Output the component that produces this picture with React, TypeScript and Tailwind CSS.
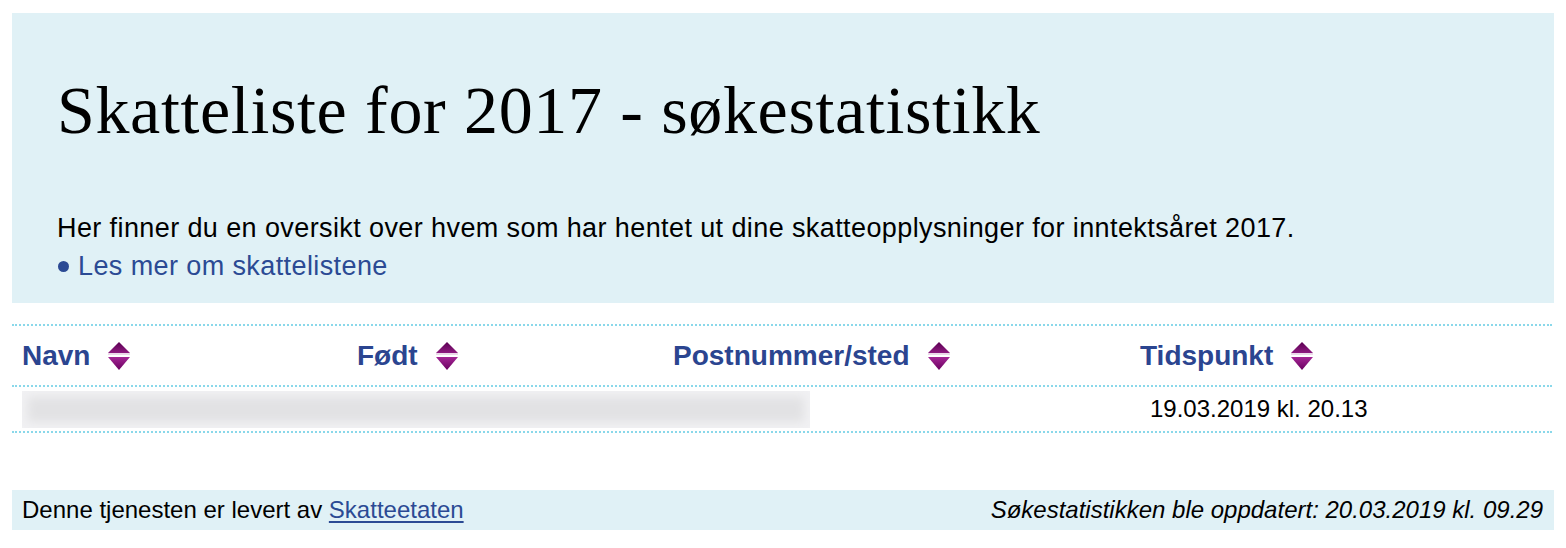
import type { ReactNode } from 'react';

function SortIcon() {
  return (
    <svg width="24" height="30" viewBox="0 0 24 30" className="ml-[17px] shrink-0">
      <defs>
        <linearGradient id="sortUp" x1="0" y1="0" x2="0" y2="1">
          <stop offset="0" stopColor="#5b0052" />
          <stop offset="1" stopColor="#8e1a80" />
        </linearGradient>
        <linearGradient id="sortDown" x1="0" y1="0" x2="0" y2="1">
          <stop offset="0" stopColor="#a42695" />
          <stop offset="1" stopColor="#6a0060" />
        </linearGradient>
      </defs>
      <polygon points="12,1 23,12 1,12" fill="url(#sortUp)" />
      <rect x="1" y="12.5" width="22" height="1" fill="#b06aa8" opacity="0.5" />
      <polygon points="1,16 23,16 12,29" fill="url(#sortDown)" />
    </svg>
  );
}

function HeaderCell({ children, className }: { children: ReactNode; className: string }) {
  return (
    <div className={`flex items-center ${className}`}>
      <span>{children}</span>
      <SortIcon />
    </div>
  );
}

export default function App() {
  return (
    <div className="min-h-[548px] bg-white px-3 pt-[13px] font-['Liberation_Sans',Arial,sans-serif] text-black">
      <section className="h-[290px] bg-[#e0f1f6] px-[45px] pt-[57px]">
        <h1 className="font-['Liberation_Serif',Georgia,serif] text-[68px] leading-[80px] tracking-[0.65px]">
          Skatteliste for 2017 - søkestatistikk
        </h1>
        <p className="mt-[62px] text-[27px] leading-[32px] tracking-[0.4px]">
          Her finner du en oversikt over hvem som har hentet ut dine skatteopplysninger for inntektsåret 2017.
        </p>
        <a
          href="#"
          className="mt-[6px] flex items-center text-[27px] leading-[32px] tracking-[0.4px] text-[#2b4a94]"
        >
          <span className="ml-px mr-[9px] inline-block h-[11px] w-[11px] rounded-full bg-[#2b4a94]" />
          Les mer om skattelistene
        </a>
      </section>

      <div className="mr-[2px] mt-[21px] border-t-2 border-dotted border-[#8ad8ea]">
        <div className="flex h-[59px] items-center pl-[10px] text-[28px] font-bold text-[#2b4590]">
          <HeaderCell className="w-[335px]">Navn</HeaderCell>
          <HeaderCell className="w-[316px]">Født</HeaderCell>
          <HeaderCell className="w-[467px]">Postnummer/sted</HeaderCell>
          <HeaderCell className="">Tidspunkt</HeaderCell>
        </div>
        <div className="flex h-[48px] items-center border-y-2 border-dotted border-[#8ad8ea] pl-[10px]">
          <div className="h-[37px] w-[788px] bg-[#e2e2e4] shadow-[inset_0_0_10px_6px_#f1f1f3]" />
          <div className="ml-[340px] text-[24px]">19.03.2019 kl. 20.13</div>
        </div>
      </div>

      <footer className="mt-[57px] flex h-[40px] items-center justify-between bg-[#e0f1f6] pl-[10px] pr-[11px] text-[24px]">
        <div>
          Denne tjenesten er levert av{' '}
          <a href="#" className="text-[#2b4a94] underline decoration-2 underline-offset-[3px]">
            Skatteetaten
          </a>
        </div>
        <div className="italic">Søkestatistikken ble oppdatert: 20.03.2019 kl. 09.29</div>
      </footer>
    </div>
  );
}
